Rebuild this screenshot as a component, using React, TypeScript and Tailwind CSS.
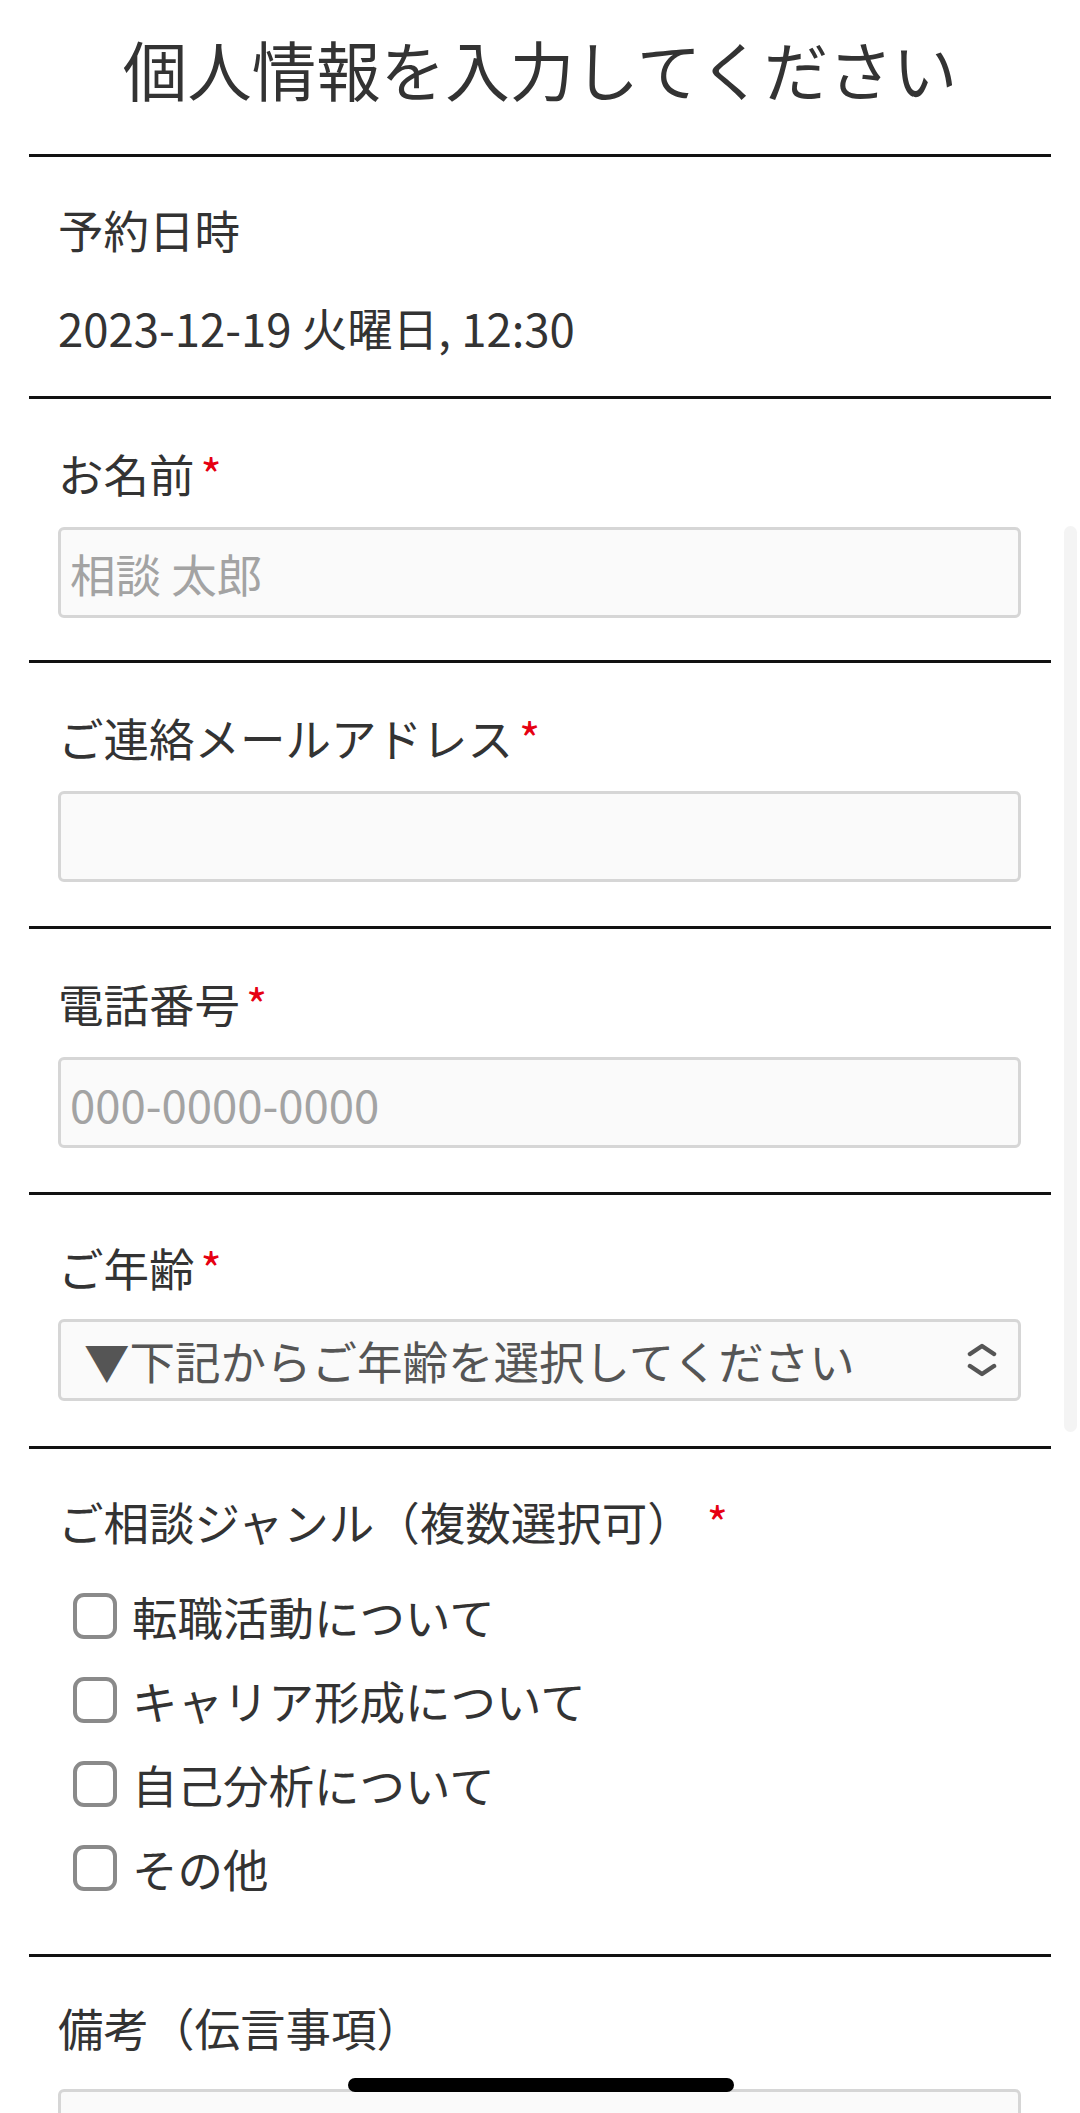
import React from 'react';

const genres = ['転職活動について', 'キャリア形成について', '自己分析について', 'その他'];

function Required({ wide = false }: { wide?: boolean }) {
  return <span className={`${wide ? 'ml-[14px]' : 'ml-[6px]'} text-[#e60012]`}>*</span>;
}

function Label({ children }: { children: React.ReactNode }) {
  return <div className="text-[45.5px] leading-[68px] text-[#333]">{children}</div>;
}

function Section({ children, className = '' }: { children: React.ReactNode; className?: string }) {
  return <section className={`border-t-[3px] border-[#111] pl-[29px] pr-[30px] ${className}`}>{children}</section>;
}

const inputCls =
  'block w-full rounded-[6px] border-[3px] border-[#d6d6d6] bg-[#fafafa] px-[9px] text-[45.5px] text-[#333] outline-none placeholder:text-[#a3a3a3]';

export default function App() {
  return (
    <div className="relative h-[2113px] w-[1080px] overflow-hidden bg-white font-['Noto_Sans_CJK_JP','Noto_Sans',sans-serif] text-[#333]">
      <h1 className="pt-[16px] text-center text-[64.5px] font-normal leading-[105px]">個人情報を入力してください</h1>

      <div className="mt-[33px] mx-[29px]">
        {/* 予約日時 */}
        <Section className="pt-[38px] pb-[35px]">
          <Label>予約日時</Label>
          <div className="mt-[30px] text-[45.5px] leading-[68px]">2023-12-19 火曜日, 12:30</div>
        </Section>

        <Section className="pt-[40px] pb-[42px]">
          <Label>
            お名前
            <Required />
          </Label>
          <input className={`${inputCls} mt-[20px] h-[91px]`} placeholder="相談 太郎" />
        </Section>

        <Section className="pt-[40px] pb-[44px]">
          <Label>
            ご連絡メールアドレス
            <Required />
          </Label>
          <input className={`${inputCls} mt-[20px] h-[91px]`} type="email" />
        </Section>

        <Section className="pt-[40px] pb-[44px]">
          <Label>
            電話番号
            <Required />
          </Label>
          <input className={`${inputCls} mt-[20px] h-[91px]`} placeholder="000-0000-0000" />
        </Section>

        <Section className="pt-[38px] pb-[45px]">
          <Label>
            ご年齢
            <Required />
          </Label>
          <div className="relative mt-[18px]">
            <select
              className="block h-[82px] w-full appearance-none rounded-[6px] border-[3px] border-[#d6d6d6] bg-[#fafafa] pl-[23px] text-[45.5px] text-[#555] outline-none"
              defaultValue=""
            >
              <option value="">▼下記からご年齢を選択してください</option>
            </select>
            <svg
              className="pointer-events-none absolute right-[24px] top-1/2 -translate-y-1/2"
              width="30"
              height="34"
              viewBox="0 0 30 34"
              fill="none"
              stroke="#555"
              strokeWidth="4.5"
              strokeLinecap="round"
              strokeLinejoin="round"
            >
              <path d="M3 11 L15 3 L27 11" />
              <path d="M3 23 L15 31 L27 23" />
            </svg>
          </div>
        </Section>

        <Section className="pt-[38px] pb-[52px]">
          <Label>
            ご相談ジャンル（複数選択可）
            <Required wide />
          </Label>
          <div className="mt-[27px] flex flex-col gap-[16px] pl-[15px]">
            {genres.map((g) => (
              <label key={g} className="flex items-center gap-[15px] text-[45.5px] leading-[68px]">
                <span className="h-[46px] w-[44px] shrink-0 rounded-[11px] border-[4px] border-[#8a8a8a] bg-white" />
                {g}
              </label>
            ))}
          </div>
        </Section>

        <Section className="pt-[36px]">
          <Label>備考（伝言事項）</Label>
          <textarea className={`${inputCls} mt-[28px] h-[220px] resize-none`} />
        </Section>
      </div>

      {/* scroll indicator */}
      <div className="absolute right-[3px] top-[526px] h-[906px] w-[13px] rounded-full bg-[#f4f4f4]" />

      {/* home indicator */}
      <div className="absolute left-[348px] top-[2078px] h-[14px] w-[386px] rounded-full bg-black" />
    </div>
  );
}
